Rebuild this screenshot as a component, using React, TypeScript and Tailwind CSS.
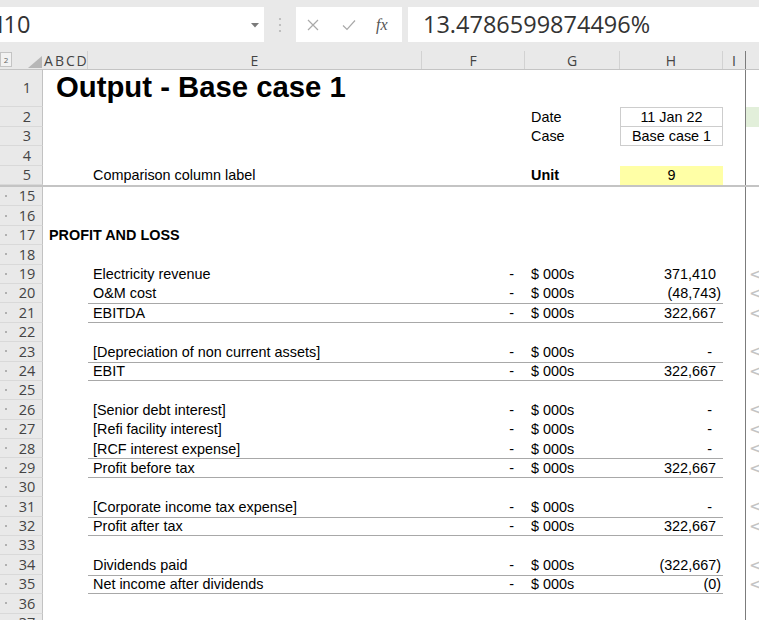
import clsx from 'clsx';
import type { ReactNode } from 'react';

type Line = {
  n: number;
  label?: string;
  value?: string;
  heading?: string;
  total?: boolean;
};

const body: Line[] = [
  { n: 15 },
  { n: 16 },
  { n: 17, heading: 'PROFIT AND LOSS' },
  { n: 18 },
  { n: 19, label: 'Electricity revenue', value: '371,410' },
  { n: 20, label: 'O&M cost', value: '(48,743)' },
  { n: 21, label: 'EBITDA', value: '322,667', total: true },
  { n: 22 },
  { n: 23, label: '[Depreciation of non current assets]', value: '-' },
  { n: 24, label: 'EBIT', value: '322,667', total: true },
  { n: 25 },
  { n: 26, label: '[Senior debt interest]', value: '-' },
  { n: 27, label: '[Refi facility interest]', value: '-' },
  { n: 28, label: '[RCF interest expense]', value: '-' },
  { n: 29, label: 'Profit before tax', value: '322,667', total: true },
  { n: 30 },
  { n: 31, label: '[Corporate income tax expense]', value: '-' },
  { n: 32, label: 'Profit after tax', value: '322,667', total: true },
  { n: 33 },
  { n: 34, label: 'Dividends paid', value: '(322,667)' },
  { n: 35, label: 'Net income after dividends', value: '(0)', total: true },
  { n: 36 },
  { n: 37 },
];

// right padding so the numbers line up like an accounting format
const valuePad = (v: string) => (v === '-' ? 'pr-[11px]' : v.endsWith(')') ? 'pr-[2px]' : 'pr-[7px]');

function RowHead({ n, dot }: { n: number; dot?: boolean }) {
  return (
    <div className="w-[43px] shrink-0 flex bg-[#e9e9e9] border-r border-r-[#c2c2c2] border-b border-b-[#d9d9d9] font-['Open_Sans',sans-serif] text-[14.5px] text-[#444]">
      <div className="w-[12px] flex items-center justify-center">
        {dot && <span className="w-[2px] h-[2px] bg-[#b0b0b0]" />}
      </div>
      <div className="flex-1 flex items-center justify-center leading-none pt-[1px]">{n}</div>
    </div>
  );
}

interface RowProps {
  n: number;
  h: string;
  dot?: boolean;
  abcd?: ReactNode;
  e?: ReactNode;
  f?: ReactNode;
  g?: ReactNode;
  hCell?: ReactNode;
  hClass?: string;
  total?: boolean;
  j?: ReactNode;
  jClass?: string;
}

function Row({ n, h, dot, abcd, e, f, g, hCell, hClass, total, j, jClass }: RowProps) {
  return (
    <div className={clsx('flex shrink-0', h)}>
      <RowHead n={n} dot={dot} />
      <div className="w-[45px] shrink-0 flex items-center whitespace-nowrap leading-none">{abcd}</div>
      <div className={clsx('flex', total && 'border-y border-[#a8a8a8]')}>
        <div className="w-[334px] shrink-0 flex items-center pl-[5px] whitespace-nowrap leading-none">{e}</div>
        <div className="w-[103px] shrink-0 flex items-center justify-end pr-[11px] leading-none">{f}</div>
        <div className="w-[95px] shrink-0 flex items-center pl-[6px] whitespace-nowrap leading-none">{g}</div>
        <div className={clsx('w-[103px] shrink-0 flex items-center leading-none whitespace-nowrap', hClass)}>{hCell}</div>
      </div>
      <div className="w-[23px] shrink-0 border-r border-r-[#7c7c7c]" />
      <div className={clsx('flex-1 flex items-center pl-[3px] leading-none overflow-hidden', jClass)}>{j}</div>
    </div>
  );
}

function Arrow() {
  return <span className="text-[#c4c4c4] text-[17px] font-['DejaVu_Sans',sans-serif] leading-none">&lt;</span>;
}

function FormulaBar() {
  return (
    <div className="h-[51px] shrink-0 bg-[#e9e9e9] flex items-start pt-[7px]">
      <div className="w-[264px] h-[35px] bg-white flex items-center overflow-hidden relative">
        <span className="-ml-[3px] font-['Open_Sans',sans-serif] text-[23.5px] text-[#333] leading-none">I10</span>
        <svg className="absolute left-[251px] top-[16px]" width="8" height="5" viewBox="0 0 8 5">
          <path d="M0 0 L8 0 L4 4.5 Z" fill="#7a7a7a" />
        </svg>
      </div>
      <div className="w-[32px] h-[35px] flex items-center justify-center">
        <svg width="4" height="16" viewBox="0 0 4 16">
          <circle cx="2" cy="2" r="1.1" fill="#b5b5b5" />
          <circle cx="2" cy="8" r="1.1" fill="#b5b5b5" />
          <circle cx="2" cy="14" r="1.1" fill="#b5b5b5" />
        </svg>
      </div>
      <div className="w-[106px] h-[35px] bg-white flex items-center">
        <svg className="ml-[11px]" width="12" height="12" viewBox="0 0 12 12">
          <path d="M1 1 L11 11 M11 1 L1 11" stroke="#a9a9a9" strokeWidth="1.2" />
        </svg>
        <svg className="ml-[23px]" width="14" height="12" viewBox="0 0 14 12">
          <path d="M1 6.5 L5 10.5 L13 1.5" stroke="#a9a9a9" strokeWidth="1.2" fill="none" />
        </svg>
        <span className="ml-[20px] font-['Liberation_Serif',serif] italic text-[16px] text-[#555] leading-none">fx</span>
      </div>
      <div className="ml-[6px] flex-1 h-[35px] bg-white flex items-center pl-[15px]">
        <span className="font-['Open_Sans',sans-serif] text-[23.5px] text-[#333] leading-none">13.4786599874496%</span>
      </div>
    </div>
  );
}

function HeaderRow() {
  const cell = 'shrink-0 flex items-center justify-center pt-[2px] border-r border-r-[#d2d2d2]';
  return (
    <div className="h-[19px] shrink-0 flex bg-[#e9e9e9] border-b border-b-[#c4c4c4] font-['Open_Sans',sans-serif] text-[14px] text-[#444] leading-none">
      <div className="w-[43px] shrink-0 relative">
        <div className="absolute left-0 top-[1px] w-[12px] h-[15px] border border-[#c4c4c4] bg-[#f2f2f2] flex items-center justify-center text-[8px] text-[#666]">
          2
        </div>
        <svg className="absolute left-[28px] top-[5px]" width="14" height="12" viewBox="0 0 14 12">
          <path d="M14 0 L14 12 L0 12 Z" fill="#b7b7b7" />
        </svg>
      </div>
      <div className="w-[11px] shrink-0 flex items-center justify-center pt-[2px]">A</div>
      <div className="w-[11px] shrink-0 flex items-center justify-center pt-[2px]">B</div>
      <div className="w-[11px] shrink-0 flex items-center justify-center pt-[2px]">C</div>
      <div className={clsx('w-[12px]', cell)}>D</div>
      <div className={clsx('w-[334px]', cell)}>E</div>
      <div className={clsx('w-[103px]', cell)}>F</div>
      <div className={clsx('w-[95px]', cell)}>G</div>
      <div className={clsx('w-[103px]', cell)}>H</div>
      <div className="w-[23px] shrink-0 flex items-center justify-center pt-[2px] border-r border-r-[#7c7c7c]">I</div>
      <div className="flex-1" />
    </div>
  );
}

export default function App() {
  return (
    <div className="w-[759px] h-[620px] overflow-hidden bg-white flex flex-col font-['Liberation_Sans',Arial,sans-serif] text-[14.4px] text-black">
      <FormulaBar />
      <HeaderRow />

      <Row
        n={1}
        h="h-[37px]"
        abcd={
          <span className="pl-[13px] text-[29.3px] font-bold self-end pb-[6px] leading-none">Output - Base case 1</span>
        }
      />
      <Row
        n={2}
        h="h-[19.5px]"
        g="Date"
        hCell="11 Jan 22"
        hClass="justify-center border border-[#cdcdcd]"
        jClass="bg-[#e2efda]"
      />
      <Row n={3} h="h-[19.5px]" g="Case" hCell="Base case 1" hClass="justify-center border-x border-b border-[#cdcdcd]" />
      <Row n={4} h="h-[19.5px]" />
      <Row
        n={5}
        h="h-[19.5px]"
        e="Comparison column label"
        g={<span className="font-bold">Unit</span>}
        hCell="9"
        hClass="justify-center bg-[#ffffa6]"
      />
      <div className="h-[2px] shrink-0 bg-[#c4c4c4]" />

      {body.map(r => (
        <Row
          key={r.n}
          n={r.n}
          h="h-[19.4px]"
          dot
          total={r.total}
          abcd={r.heading && <span className="pl-[6px] font-bold">{r.heading}</span>}
          e={r.label}
          f={r.label && '-'}
          g={r.label && '$ 000s'}
          hCell={r.value}
          hClass={clsx('justify-end', r.value && valuePad(r.value))}
          j={r.label && <Arrow />}
        />
      ))}
    </div>
  );
}
